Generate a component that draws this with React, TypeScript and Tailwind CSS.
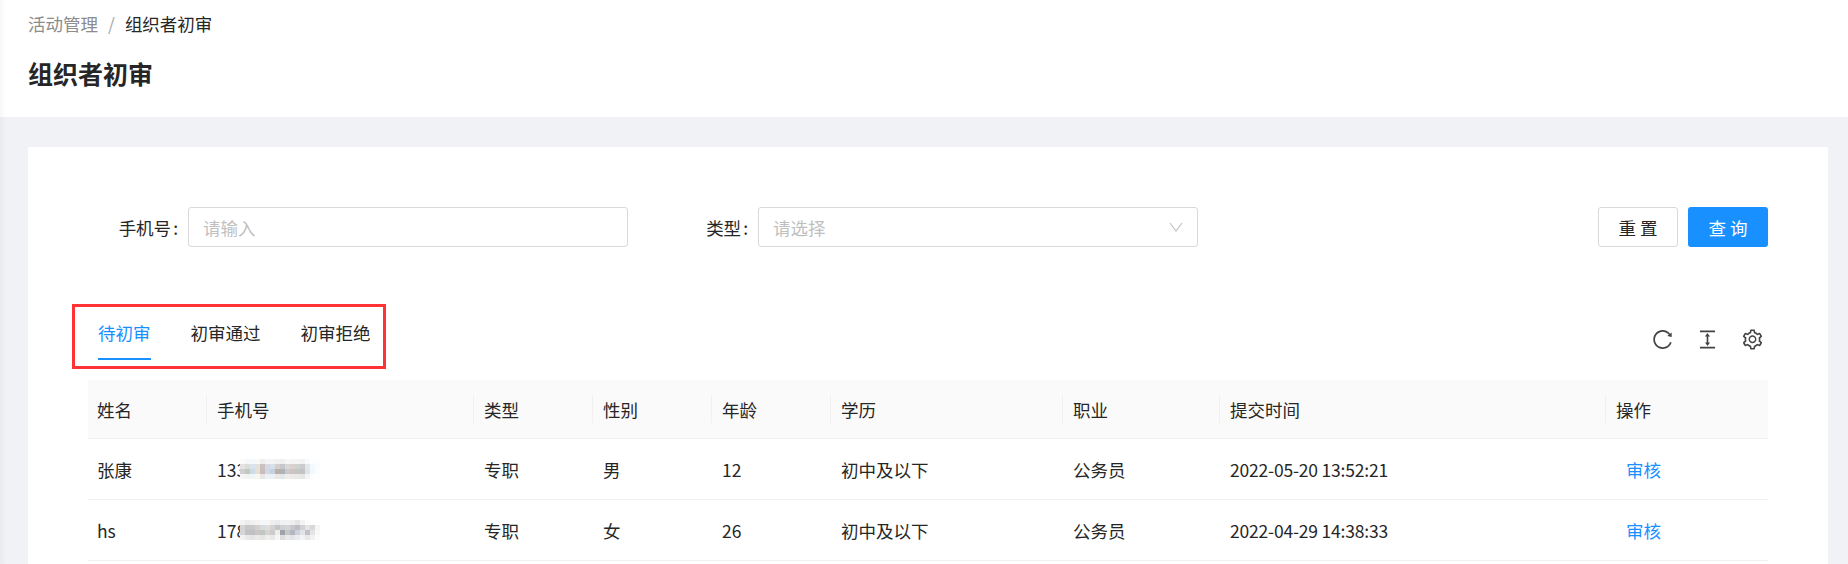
import React from "react";
import { AiOutlineReload, AiOutlineColumnHeight, AiOutlineSetting } from "react-icons/ai";

const FONT = "[font-family:'Noto_Sans_CJK_SC','Liberation_Sans',sans-serif]";
const GRID = "grid grid-cols-[118px_267px_119px_119px_119px_232px_157px_386px_163px]";

const headers = ["姓名", "手机号", "类型", "性别", "年龄", "学历", "职业", "提交时间", "操作"];

const mosaicA = [
  ["#fbfbfb","#f6f8f8","#f4f8fb","#f9f9f7","#efeded","#f3f4f8","#f2f5f8","#f3f1ef","#f0f0f2","#f6f6f6","#f6f4f3","#f3f5f5","#f2f2f3","#f8fbfd","#fdfeff","#fefeff","#ffffff"],
  ["#e3e3e1","#dcdcd8","#d9e4ec","#e6e2db","#c9c2c2","#d7d9e4","#d5e0ea","#d8d0c8","#c6c7cb","#d8d8d8","#d9d1cd","#cdd3d3","#cbcbcd","#e2e9ee","#f4fbff","#fafdff","#ffffff"],
  ["#cfcfcf","#c0cbc0","#cfdbe6","#e8e0d2","#c9bdbd","#d3d7e2","#c3d2e2","#bfaea6","#aeb3b6","#c9cace","#cfc4c0","#c4c6c6","#c3c2c4","#dfe5ea","#f2f9fd","#fbfeff","#ffffff"],
  ["#f5f5f5","#f2f3f1","#f0f5f8","#f8f6f1","#e9e6e6","#eff0f4","#ebf0f5","#ece7e3","#e6e7e9","#eeeeef","#eeeaea","#e9ebeb","#e8e7e8","#f2f5f7","#fbfdff","#fefeff","#ffffff"],
];
const mosaicB = [
  ["#f2f2f2","#ececec","#f0f0ee","#f5f3f1","#f4f6f8","#f6f6f6","#eeeeee","#ebebec","#f0f1f2","#f2f2f4","#eeeeef","#e5e5e5","#f3f3f3","#fbfbfb","#fefefe","#ffffff","#ffffff"],
  ["#d4d4d4","#c6c6c8","#c8c8c8","#d2cfcc","#d9dadd","#dedede","#d2d2d2","#c4c5c6","#cfd0d2","#d4d3d6","#c8c8cc","#bdbec2","#cfd2d6","#e2e4e6","#d8d8d8","#f5f5f5","#ffffff"],
  ["#d6d6d6","#c2c2c6","#bfc0c2","#c9c7c5","#c3c6c0","#d6d4d0","#cbcbcb","#f0ebe4","#9fa3ac","#c6c7c9","#b2b8c2","#cdd2d8","#e2e3e6","#c2c2c6","#e4e4e4","#f8f8f8","#ffffff"],
  ["#f2f2f2","#e9e9ea","#e5e5e5","#ebeae9","#e5e6e3","#efeeec","#e8e8e8","#f8f6f3","#dcdde0","#e9e9ea","#e0e3e7","#eaecee","#f3f3f4","#e8e8ea","#f2f2f2","#fcfcfc","#ffffff"],
];

function Mosaic({ cells }: { cells: string[][] }) {
  return (
    <svg width="85" height="20" viewBox="0 0 85 20" className="block shrink-0" shapeRendering="crispEdges">
      {cells.flatMap((row, y) =>
        row.map((c, x) => <rect key={`${x}-${y}`} x={x * 5} y={y * 5} width="5" height="5" fill={c} />)
      )}
    </svg>
  );
}

const rows = [
  { name: "张康", prefix: "133", mosaic: mosaicA, gender: "男", age: "12", time: "2022-05-20 13:52:21" },
  { name: "hs", prefix: "178", mosaic: mosaicB, gender: "女", age: "26", time: "2022-04-29 14:38:33" },
];

function Cell({ children, className = "" }: { children: React.ReactNode; className?: string }) {
  return <div className={`flex items-center pl-[11px] ${className}`}>{children}</div>;
}

function FieldLabel({ text, className = "" }: { text: string; className?: string }) {
  return (
    <label className={`w-[100px] pr-[10px] text-right ${className}`}>
      {text}
      <span className="ml-[2px]">:</span>
    </label>
  );
}

export default function App() {
  return (
    <div className={`relative h-[564px] overflow-hidden bg-[#f0f2f5] text-[17.5px] leading-[27px] text-[#262626] ${FONT}`}>
      <div className="absolute left-0 top-0 h-full w-[6px] bg-gradient-to-r from-black/[0.03] to-transparent" />

      <header className="h-[117px] bg-white pl-[28px] pt-[10px]">
        <div className="flex items-center">
          <span className="text-[#8c8c8c]">活动管理</span>
          <span className="mx-[10px] text-[#a6a6a6]">/</span>
          <span>组织者初审</span>
        </div>
        <h1 className="mt-[16px] text-[25px] font-semibold leading-[40px] text-[#262626]">组织者初审</h1>
      </header>

      <main className="relative ml-[28px] mr-[20px] mt-[30px] h-[600px] bg-white px-[60px] pt-[60px]">
        <div className="flex h-[40px] items-center">
          <FieldLabel text="手机号" />
          <div className="flex h-[40px] w-[440px] items-center rounded-[3px] border border-[#d9d9d9] px-[14px] text-[#bfbfbf]">请输入</div>
          <FieldLabel text="类型" className="ml-[30px]" />
          <div className="flex h-[40px] w-[440px] items-center justify-between rounded-[3px] border border-[#d9d9d9] px-[14px] text-[#bfbfbf]">
            <span>请选择</span>
            <svg width="14" height="10" viewBox="0 0 14 10" fill="none" stroke="#bfbfbf" strokeWidth="1.1">
              <path d="M1 1 L7 9 L13 1" />
            </svg>
          </div>
          <div className="ml-auto flex gap-[10px]">
            <button className="h-[40px] w-[80px] rounded-[3px] border border-[#d9d9d9] bg-white text-[#262626]">重 置</button>
            <button className="h-[40px] w-[80px] rounded-[3px] bg-[#1890ff] text-white">查 询</button>
          </div>
        </div>

        <div className="mb-[20px] mt-[72px] flex items-start justify-between">
          <nav className="flex gap-[40px] pl-[10px]">
            <a className="border-b-2 border-[#1890ff] pb-[12px] text-[#1890ff]">待初审</a>
            <a className="pb-[14px]">初审通过</a>
            <a className="pb-[14px]">初审拒绝</a>
          </nav>
          <div className="mr-[4px] mt-[9px] flex items-center gap-[22px] text-[23px] text-[#434343]">
            <AiOutlineReload />
            <AiOutlineColumnHeight />
            <AiOutlineSetting />
          </div>
        </div>

        <div className={`${GRID} h-[59px] border-b border-[#f0f0f0] bg-[#fafafa]`}>
          {headers.map((h, i) => (
            <div key={h} className="flex items-center">
              <div className={`flex h-[28px] w-full items-center ${i === 0 ? "pl-[9px]" : "border-l border-[#f0f0f0] pl-[10px]"}`}>{h}</div>
            </div>
          ))}
        </div>

        {rows.map((r) => (
          <div key={r.time} className={`${GRID} h-[61px] border-b border-[#f0f0f0]`}>
            <Cell className="!pl-[9px]">{r.name}</Cell>
            <Cell>
              <span className="w-[23px] whitespace-nowrap">{r.prefix}</span>
              <Mosaic cells={r.mosaic} />
            </Cell>
            <Cell>专职</Cell>
            <Cell>{r.gender}</Cell>
            <Cell>{r.age}</Cell>
            <Cell>初中及以下</Cell>
            <Cell>公务员</Cell>
            <Cell className="tracking-[-0.2px]">{r.time}</Cell>
            <Cell className="!pl-[21px] text-[#1890ff]">审核</Cell>
          </div>
        ))}

        <div className="absolute left-[44px] top-[157px] h-[65px] w-[314px] border-[3px] border-[#f33]" />
      </main>
    </div>
  );
}
